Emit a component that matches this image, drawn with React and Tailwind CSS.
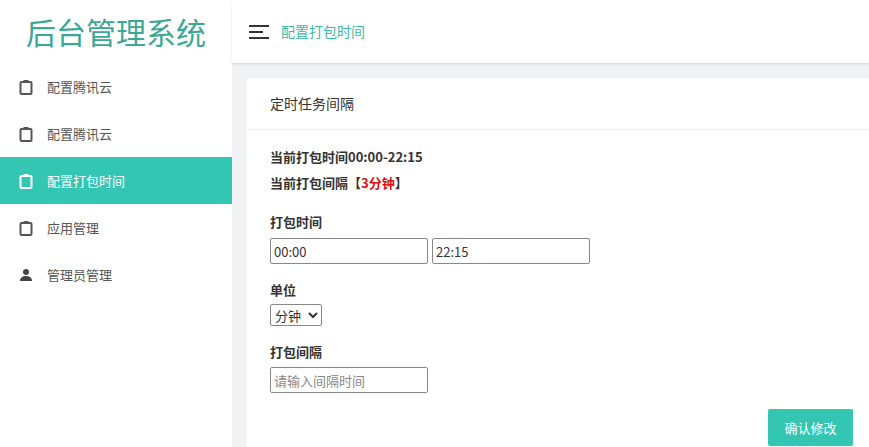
const F = { fontFamily: '"Noto Sans CJK SC", "Liberation Sans", sans-serif' };

const Clip = ({ c }) => (
  <svg width="14" height="16" viewBox="0 0 14 16" fill="none" stroke={c} strokeWidth="2">
    <rect x="1.5" y="3" width="11" height="12" rx="1" />
    <rect x="4.5" y="1" width="5" height="3" fill={c} stroke="none" />
  </svg>
);
const User = () => (
  <svg width="14" height="14" viewBox="0 0 14 14" fill="#444">
    <circle cx="7" cy="4" r="3" />
    <path d="M1 13c0-3.5 2.5-5 6-5s6 1.5 6 5z" />
  </svg>
);

const items = [
  { t: "配置腾讯云" },
  { t: "配置腾讯云" },
  { t: "配置打包时间", active: true },
  { t: "应用管理" },
  { t: "管理员管理", user: true },
];

export default function App() {
  return (
    <div className="flex w-[869px] h-[447px] overflow-hidden bg-[#f0f2f5] text-[#333]" style={F}>
      <div className="w-[232px] bg-white flex flex-col shrink-0">
        <div className="h-[63px] flex items-center justify-center text-[30px] text-[#3aa893]">后台管理系统</div>
        {items.map((it, i) => (
          <div key={i} className={`h-[47px] flex items-center pl-[19px] gap-[14px] text-[13px] ${it.active ? "bg-[#33c6b2] text-white" : "text-[#555]"}`}>
            <span className="w-[14px] flex justify-center">{it.user ? <User /> : <Clip c={it.active ? "#fff" : "#555"} />}</span>
            {it.t}
          </div>
        ))}
      </div>
      <div className="flex-1 flex flex-col">
        <div className="h-[63px] bg-white flex items-center pl-[17px] gap-[12px] shadow-sm">
          <svg width="20" height="14" viewBox="0 0 20 14" stroke="#333" strokeWidth="2"><path d="M0 1h20M0 7h14M0 13h20" /></svg>
          <span className="text-[14px] text-[#3fb9a4]">配置打包时间</span>
        </div>
        <div className="flex-1 mt-[15px] ml-[15px] bg-white flex flex-col">
          <div className="h-[52px] flex items-center px-[23px] text-[14px] border-b border-[#eee]">定时任务间隔</div>
          <div className="px-[23px] pt-[14px] text-[13px] flex flex-col">
            <div className="font-bold leading-[26px]">当前打包时间00:00-22:15</div>
            <div className="font-bold leading-[26px]">当前打包间隔【<span className="text-[#e01010]">3分钟</span>】</div>
            <div className="font-bold mt-[16px] leading-[20px]">打包时间</div>
            <div className="flex gap-[4px] mt-[6px]">
              <input defaultValue="00:00" className="w-[158px] h-[26px] border border-[#888] rounded-[2px] px-[3px] text-[13px]" />
              <input defaultValue="22:15" className="w-[158px] h-[26px] border border-[#888] rounded-[2px] px-[3px] text-[13px]" />
            </div>
            <div className="font-bold mt-[16px] leading-[20px]">单位</div>
            <select className="w-[52px] h-[22px] mt-[4px] border border-[#888] rounded-[2px] text-[13px]"><option>分钟</option></select>
            <div className="font-bold mt-[16px] leading-[20px]">打包间隔</div>
            <input placeholder="请输入间隔时间" className="w-[158px] h-[26px] mt-[5px] border border-[#888] rounded-[2px] px-[3px] text-[13px] placeholder-[#888]" />
            <div className="flex justify-end -mr-[7px] mt-[16px]">
              <button className="w-[85px] h-[37px] bg-[#33c6b2] text-white text-[13px] rounded-[2px]">确认修改</button>
            </div>
          </div>
        </div>
      </div>
    </div>
  );
}
